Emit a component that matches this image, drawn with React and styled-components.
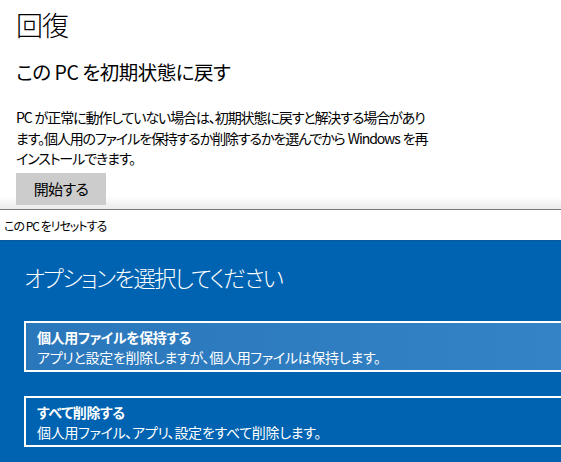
import React from 'react'
import styled, { createGlobalStyle } from 'styled-components'

const Global = createGlobalStyle`
    html, body {
        margin: 0;
        padding: 0;
        background: #fff;
        overflow: hidden;
    }
    body {
        font-family: "Noto Sans CJK JP", "Noto Sans", sans-serif;
        font-feature-settings: "palt";
        color: #000;
    }
`

const Page = styled.div`
    width: 561px;
    height: 462px;
    display: flex;
    flex-direction: column;
    overflow: hidden;
`

const Settings = styled.section`
    padding: 7px 16px 0;
    height: 202px;
    background: linear-gradient(to bottom, #fff 0, #fff 196px, #ebebeb 209px);
    border-bottom: 1px solid #7a7a7a;
    display: flex;
    flex-direction: column;
    align-items: flex-start;
`

const Title = styled.h1`
    margin: 0;
    font-size: 27px;
    font-weight: 300;
    line-height: 36px;
    letter-spacing: -1px;
`

const Subtitle = styled.h2`
    margin: 15px 0 0;
    font-size: 19.5px;
    font-weight: 400;
    line-height: 28px;
    letter-spacing: -0.5px;
`

const Text = styled.p`
    margin: 21px 0 0;
    font-size: 14px;
    line-height: 20.5px;
    letter-spacing: -1.1px;
    word-spacing: 1px;
    white-space: nowrap;
`

const StartButton = styled.button`
    margin-top: 4px;
    width: 90px;
    height: 32px;
    border: none;
    background: #cccccc;
    font-family: inherit;
    font-feature-settings: "palt";
    font-size: 15px;
    letter-spacing: -0.6px;
    color: #000;
    padding: 0;
`

const TitleBar = styled.div`
    height: 30px;
    background: #fff;
    padding-left: 4px;
    display: flex;
    align-items: center;
    font-size: 12px;
    letter-spacing: -1px;
    border-bottom: 1px solid #0a5a9c;
`

const Dialog = styled.section`
    flex: 1;
    background: #0063b1;
    color: #fff;
    padding: 19px 0 0 24px;
`

const DialogTitle = styled.h2`
    margin: 0;
    font-size: 22.5px;
    font-weight: 300;
    line-height: 34px;
    letter-spacing: -1.75px;
`

const Options = styled.div`
    margin-top: 27px;
    display: flex;
    flex-direction: column;
    gap: 24px;
`

const Option = styled.div`
    border: 2px solid #fff;
    border-right: none;
    height: 47px;
    padding: 0 0 0 11px;
    background: ${p => p.active ? 'linear-gradient(to right, #2a77bb, #3483c6)' : '#0063b1'};
    display: flex;
    flex-direction: column;
    justify-content: center;
`

const OptionHead = styled.div`
    font-size: 14px;
    font-weight: 700;
    line-height: 20px;
    letter-spacing: -0.4px;
`

const OptionText = styled.div`
    font-size: 14px;
    line-height: 20px;
    letter-spacing: -0.3px;
`

export default function App() {
    return <Page>
        <Global />
        <Settings>
            <Title>回復</Title>
            <Subtitle>この PC を初期状態に戻す</Subtitle>
            <Text>
                PC が正常に動作していない場合は、初期状態に戻すと解決する場合があり<br />
                ます。個人用のファイルを保持するか削除するかを選んでから Windows を再<br />
                インストールできます。
            </Text>
            <StartButton>開始する</StartButton>
        </Settings>
        <TitleBar>この PC をリセットする</TitleBar>
        <Dialog>
            <DialogTitle>オプションを選択してください</DialogTitle>
            <Options>
                <Option active>
                    <OptionHead>個人用ファイルを保持する</OptionHead>
                    <OptionText>アプリと設定を削除しますが、個人用ファイルは保持します。</OptionText>
                </Option>
                <Option>
                    <OptionHead>すべて削除する</OptionHead>
                    <OptionText>個人用ファイル、アプリ、設定をすべて削除します。</OptionText>
                </Option>
            </Options>
        </Dialog>
    </Page>
}
